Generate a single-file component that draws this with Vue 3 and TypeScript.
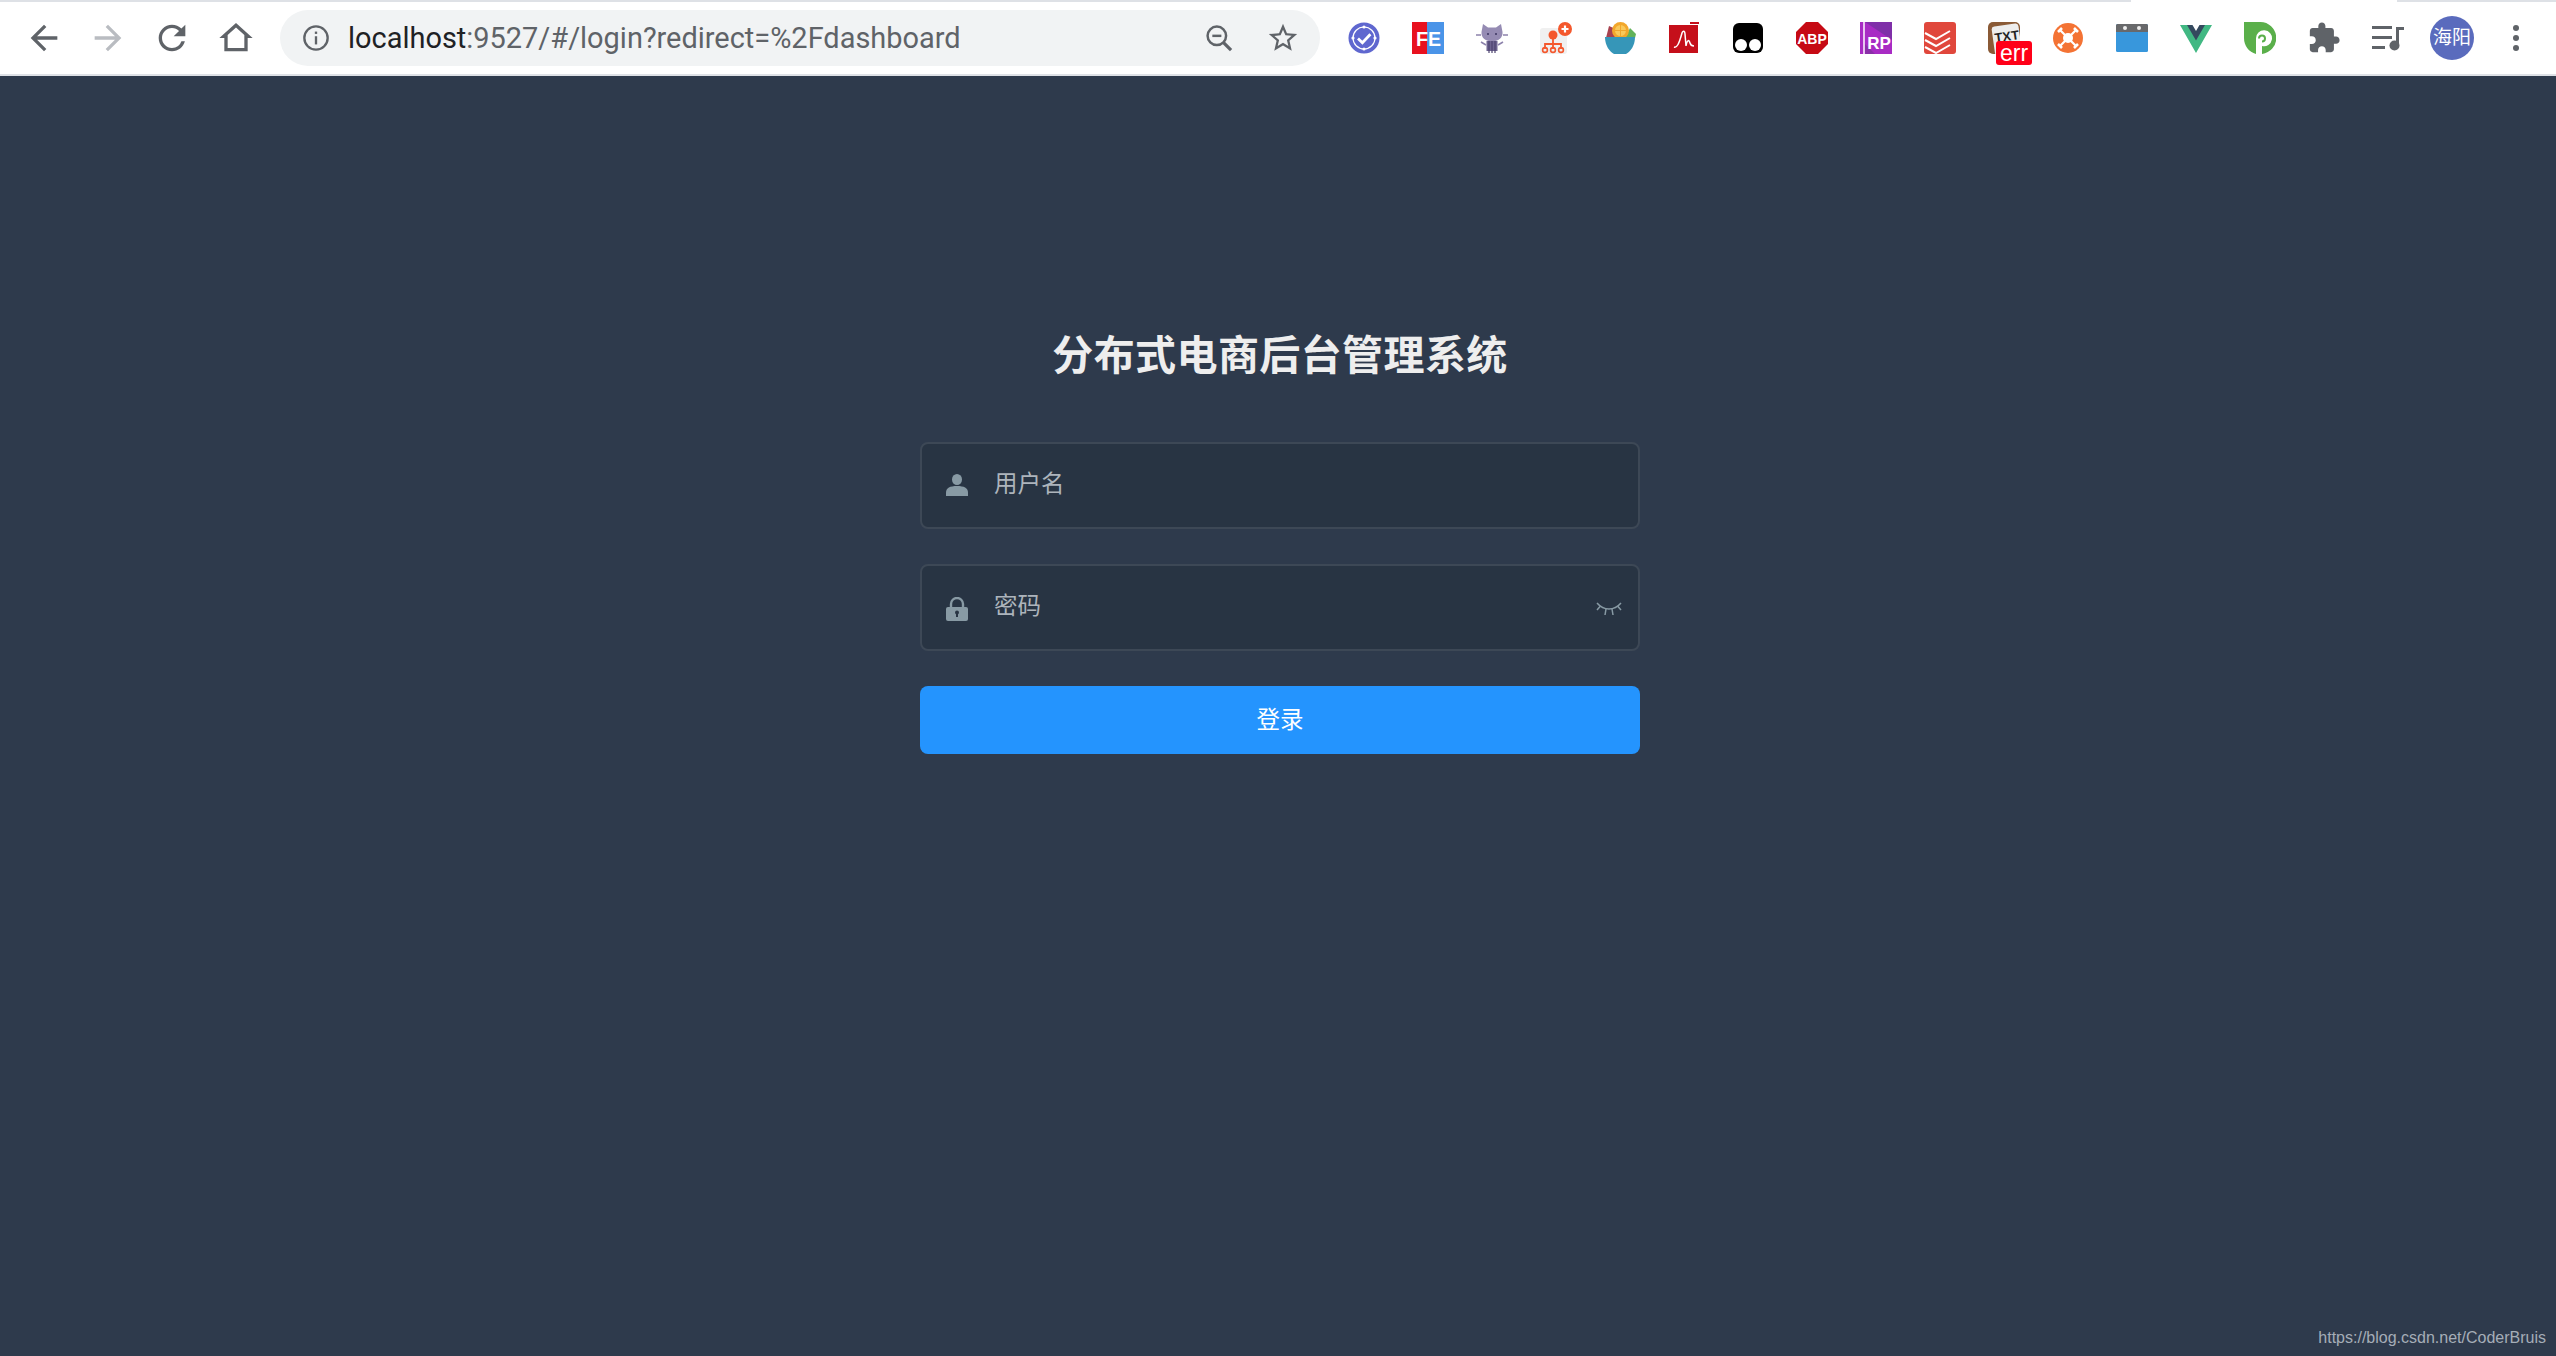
<script setup lang="ts">
const username = ''
const password = ''
</script>

<template>
  <div class="page">
    <header class="toolbar">
      <span class="active-tab"></span>
      <nav class="nav">
        <button class="nav-btn"><svg viewBox="0 0 24 24" width="40" height="40"><path fill="#5f6368" d="M20 11H7.830l5.590-5.590L12 4l-8 8 8 8 1.410-1.410L7.830 13H20v-2z"/></svg></button>
        <button class="nav-btn"><svg viewBox="0 0 24 24" width="40" height="40"><path fill="#b9bcc1" d="M4 11h12.170l-5.590-5.590L12 4l8 8-8 8-1.410-1.410L16.170 13H4v-2z"/></svg></button>
        <button class="nav-btn"><svg viewBox="0 0 24 24" width="40" height="40"><path fill="#5f6368" d="M17.650 6.350A7.958 7.958 0 0 0 12 4c-4.420 0-7.990 3.580-7.990 8s3.570 8 7.990 8c3.730 0 6.840-2.550 7.730-6h-2.080A5.990 5.990 0 0 1 12 18c-3.310 0-6-2.690-6-6s2.690-6 6-6c1.660 0 3.140.69 4.220 1.780L13 11h7V4l-2.350 2.350z"/></svg></button>
        <button class="nav-btn"><svg viewBox="0 0 24 24" width="40" height="40"><path fill="#5f6368" d="M12 5.690l5 4.500V18H7v-7.810l5-4.500M12 3L2 12h3v8h14v-8h3L12 3z"/></svg></button>
      </nav>

      <div class="omnibox">
        <svg class="info" viewBox="0 0 24 24" width="28" height="28"><circle cx="12" cy="12" r="10" fill="none" stroke="#5f6368" stroke-width="2"/><rect x="11" y="10.500" width="2" height="7" fill="#5f6368"/><rect x="11" y="6.500" width="2" height="2" fill="#5f6368"/></svg>
        <span class="url"><span class="host">localhost</span>:9527/#/login?redirect=%2Fdashboard</span>
        <span class="spacer"></span>
        <svg class="omni-zoom" viewBox="0 0 26 26" width="28" height="28"><circle cx="11" cy="11" r="8.600" fill="none" stroke="#5f6368" stroke-width="2.300"/><path d="M6.800 11h8.400" stroke="#5f6368" stroke-width="2.300"/><path d="M17.200 17.200l7 7" stroke="#5f6368" stroke-width="3"/></svg>
        <svg class="omni-star" viewBox="0 0 24 24" width="34" height="34"><path fill="#5f6368" d="M22 9.240l-7.190-.62L12 2 9.190 8.630 2 9.240l5.460 4.730L5.820 21 12 17.270 18.180 21l-1.630-7.030L22 9.240zM12 15.400l-3.760 2.270 1-4.280-3.320-2.880 4.380-.38L12 6.100l1.710 4.010 4.380.38-3.320 2.880 1 4.280L12 15.400z"/></svg>
      </div>

      <div class="extensions">
        <span class="ext">
          <svg viewBox="0 0 32 32" width="32" height="32"><circle cx="16" cy="16" r="15.500" fill="#5f67cf"/><circle cx="16" cy="16" r="11" fill="none" stroke="#fff" stroke-width="1.200"/><path d="M10 16.500l4.400 4.200 8-8.400" fill="none" stroke="#fff" stroke-width="2.800"/><circle cx="16" cy="5" r="1.600" fill="#fff"/><circle cx="16" cy="27" r="1.600" fill="#fff"/><circle cx="5" cy="16" r="1.600" fill="#fff"/><circle cx="27" cy="16" r="1.600" fill="#fff"/></svg>
        </span>
        <span class="ext">
          <svg viewBox="0 0 32 32" width="32" height="32"><rect width="16" height="32" fill="#e8111f"/><rect x="15" width="17" height="32" fill="#4a94e8"/><text x="4" y="24" textLength="25" lengthAdjust="spacingAndGlyphs" class="ext-text fe">FE</text></svg>
        </span>
        <span class="ext">
          <svg viewBox="0 0 32 32" width="32" height="32"><path d="M7 2l5 3.500h8L25 2l1.500 8c.5 6-4.500 9.500-10.500 9.500S5 16 5.500 10z" fill="#958bb3"/><rect x="10.500" y="19" width="11" height="10" fill="#6d6390"/><path d="M13 19v12M16 19v12M19 19v12" stroke="#4c4370" stroke-width="1.200"/><path d="M0 13h5M27 13h5M5 20l5 3M27 20l-5 3" stroke="#8d83ac" stroke-width="1.600"/><circle cx="12" cy="12" r="1" fill="#3d3560"/><circle cx="20" cy="12" r="1" fill="#3d3560"/></svg>
        </span>
        <span class="ext">
          <svg viewBox="0 0 32 32" width="32" height="32"><rect x="0" y="6" width="27" height="26" rx="3" fill="#f0f0f0"/><circle cx="13" cy="13" r="4.500" fill="#f4582d"/><path d="M13 17v5M5 27v-5h16v5M13 22v5" fill="none" stroke="#f4582d" stroke-width="1.800"/><circle cx="5" cy="28" r="2.400" fill="none" stroke="#f4582d" stroke-width="1.600"/><circle cx="13" cy="28" r="2.400" fill="none" stroke="#f4582d" stroke-width="1.600"/><circle cx="21" cy="28" r="2.400" fill="none" stroke="#f4582d" stroke-width="1.600"/><circle cx="25" cy="7" r="7" fill="#f4582d"/><path d="M25 3.500v7M21.500 7h7" stroke="#fff" stroke-width="2.200"/></svg>
        </span>
        <span class="ext">
          <svg viewBox="0 0 32 32" width="32" height="32"><path d="M2 16L5 4l9 4 1 8z" fill="#a8424f"/><path d="M21 16l5-10 6 6-1 4z" fill="#62b25a"/><circle cx="16.500" cy="8.500" r="8.500" fill="#f2a72c"/><circle cx="16.500" cy="8.500" r="5.500" fill="#f9c95a"/><path d="M16.500 3v11M11 8.500h11" stroke="#f2a72c" stroke-width="1"/><path d="M1 15h30c0 9-5 15-9 17H10C6 30 1 24 1 15z" fill="#3696b8"/></svg>
        </span>
        <span class="ext">
          <svg viewBox="0 0 32 32" width="32" height="32"><rect x="1" y="3" width="29" height="28" fill="#c50f1a"/><rect x="22" y="0" width="9" height="2" fill="#c50f1a"/><path d="M6 25c3 1 5-3 8-14 1-3 3-2 3 1l1 12c1-6 3-7 4-3 .5 2 1 3 4 3" fill="none" stroke="#fff" stroke-width="1.500"/></svg>
        </span>
        <span class="ext">
          <svg viewBox="0 0 32 32" width="32" height="32"><rect x="1" y="1" width="30" height="30" rx="6" fill="#000"/><circle cx="9" cy="23" r="6" fill="#fff"/><circle cx="23" cy="23" r="6" fill="#fff"/></svg>
        </span>
        <span class="ext">
          <svg viewBox="0 0 32 32" width="32" height="32"><polygon points="10,0 22,0 32,10 32,22 22,32 10,32 0,22 0,10" fill="#c60a14"/><text x="16" y="21.500" text-anchor="middle" class="ext-text abp">ABP</text></svg>
        </span>
        <span class="ext">
          <svg viewBox="0 0 32 32" width="32" height="32"><rect width="32" height="32" fill="#a82bc4"/><path d="M5 0h27v18z" fill="#7f2fa8"/><path d="M5 32h10L5 22z" fill="#8a2fa8"/><rect x="3" width="2" height="32" fill="#e8c6ef"/><text x="19" y="27" text-anchor="middle" class="ext-text rp">RP</text></svg>
        </span>
        <span class="ext">
          <svg viewBox="0 0 32 32" width="32" height="32"><rect width="32" height="32" rx="3" fill="#e0473c"/><path d="M1 11l11 6 14-8M1 18l11 6 14-8M1 25l11 6 14-8" fill="none" stroke="#fff" stroke-width="2"/></svg>
        </span>
        <span class="ext ext-err">
          <svg viewBox="0 0 32 32" width="32" height="32"><rect width="32" height="32" rx="5" fill="#8a5a36"/><rect x="5" y="3" width="27" height="29" rx="3" fill="#ededed" transform="rotate(-8 18 16)"/><text x="19" y="19" text-anchor="middle" transform="rotate(-8 18 16)" class="ext-text txt">TXT</text></svg>
          <span class="err">err</span>
        </span>
        <span class="ext">
          <svg viewBox="0 0 32 32" width="32" height="32"><circle cx="16" cy="16" r="15" fill="#f47334"/><circle cx="16" cy="16" r="5" fill="#fff"/><path d="M8 8l16 16M24 8L8 24" stroke="#fff" stroke-width="2.200"/><path d="M6 10l4-4M22 6l4 4M6 22l4 4M22 26l4-4" stroke="#fff" stroke-width="2.600"/></svg>
        </span>
        <span class="ext">
          <svg viewBox="0 0 32 32" width="32" height="32"><rect y="2" width="32" height="28" rx="1.500" fill="#3897dc"/><path d="M0 3.500A1.500 1.500 0 0 1 1.500 2h29A1.500 1.500 0 0 1 32 3.500V10H0z" fill="#68696b"/><circle cx="9" cy="6" r="2" fill="#eee"/><circle cx="23" cy="6" r="2" fill="#eee"/></svg>
        </span>
        <span class="ext">
          <svg viewBox="0 0 32 32" width="32" height="32"><polygon points="0,3 8,3 16,17 24,3 32,3 16,31" fill="#41b883"/><polygon points="7,3 12.500,3 16,9 19.500,3 25,3 16,18.500" fill="#34495e"/></svg>
        </span>
        <span class="ext">
          <svg viewBox="0 0 32 32" width="32" height="32"><path d="M0 0h16a16 16 0 0 1 2 31.900V24a8 8 0 1 0-6-7.500V32C5 30 0 24 0 16z" fill="#5aaf4a"/><path d="M15 16.500a3 3 0 1 1 3 3" fill="none" stroke="#5aaf4a" stroke-width="2"/></svg>
        </span>
        <span class="ext">
          <svg viewBox="0 0 24 24" width="34" height="34"><path fill="#5f6368" d="M20.500 11H19V7c0-1.100-.9-2-2-2h-4V3.500C13 2.120 11.880 1 10.500 1S8 2.120 8 3.500V5H4c-1.100 0-1.990.9-1.990 2v3.800H3.500c1.490 0 2.700 1.210 2.700 2.700s-1.210 2.700-2.700 2.700H2V20c0 1.100.9 2 2 2h3.800v-1.500c0-1.490 1.210-2.700 2.700-2.700 1.490 0 2.700 1.210 2.700 2.700V22H17c1.100 0 2-.9 2-2v-4h1.500c1.380 0 2.500-1.120 2.500-2.500S21.880 11 20.500 11z"/></svg>
        </span>
        <span class="ext">
          <svg viewBox="0 0 32 26" width="32" height="26"><path d="M0 1h20v3H0zM0 11h20v3H0zM0 21h13v3H0z" fill="#5f6368"/><path d="M24 2h8v3h-5v16h-3z" fill="#5f6368"/><circle cx="22.500" cy="20.500" r="5" fill="#5f6368"/></svg>
        </span>
        <span class="ext">
          <span class="avatar">海阳</span>
        </span>
        <span class="ext">
          <svg viewBox="0 0 8 28" width="8" height="28"><circle cx="4" cy="4" r="3" fill="#5f6368"/><circle cx="4" cy="14" r="3" fill="#5f6368"/><circle cx="4" cy="24" r="3" fill="#5f6368"/></svg>
        </span>
      </div>
    </header>

    <main class="login">
      <h1 class="title">分布式电商后台管理系统</h1>
      <form class="form" @submit.prevent>
        <label class="field">
          <svg class="field-icon user" viewBox="0 0 22 22" width="22" height="22"><ellipse cx="11" cy="5.500" rx="5" ry="5.500" fill="#889aa4"/><path d="M0 22v-3.500C0 14 4 12 11 12s11 2 11 6.500V22z" fill="#889aa4"/></svg>
          <input class="control" type="text" placeholder="用户名" :value="username" />
        </label>
        <label class="field">
          <svg class="field-icon lock" viewBox="0 0 22 24" width="22" height="24"><path d="M5 11V7a6 6 0 0 1 12 0v4" fill="none" stroke="#889aa4" stroke-width="2.400"/><rect y="10" width="22" height="14" rx="2" fill="#889aa4"/><circle cx="11" cy="15.500" r="2" fill="#283443"/><rect x="10" y="16" width="2" height="4" fill="#283443"/></svg>
          <input class="control" type="password" placeholder="密码" :value="password" />
          <svg class="eye" viewBox="0 0 26 14" width="26" height="14"><path d="M1 1c3 3.500 7 6 12 6s9-2.500 12-6" fill="none" stroke="#889aa4" stroke-width="1.500"/><path d="M1 8l3.500-4M25 8l-3.500-4M9 13l1-6M17 13l-1-6" fill="none" stroke="#889aa4" stroke-width="1.500"/></svg>
        </label>
        <button class="submit" type="submit">登录</button>
      </form>
    </main>

    <footer class="watermark">https://blog.csdn.net/CoderBruis</footer>
  </div>
</template>

<style>
html, body {
  margin: 0;
  background: #2e3a4c;
}
</style>

<style scoped>
.page {
  width: 2556px;
  height: 1356px;
  display: flex;
  flex-direction: column;
  background: #2e3a4c;
  overflow: hidden;
  position: relative;
  font-family: "Liberation Sans", "Noto Sans CJK SC", sans-serif;
}
.toolbar {
  position: relative;
  box-sizing: border-box;
  height: 76px;
  flex: none;
  display: flex;
  align-items: center;
  padding-left: 12px;
  background: #fff;
  border-top: 2px solid #dee1e6;
  border-bottom: 2px solid #dee1e6;
}
.active-tab {
  position: absolute;
  left: 2131px;
  top: -2px;
  width: 266px;
  height: 2px;
  background: #fff;
}
.nav {
  display: flex;
  width: 256px;
  flex: none;
}
.nav-btn {
  width: 64px;
  height: 56px;
  padding: 0;
  border: 0;
  background: none;
  display: flex;
  align-items: center;
  justify-content: center;
}
.omnibox {
  width: 1040px;
  height: 56px;
  margin-left: 12px;
  box-sizing: border-box;
  flex: none;
  display: flex;
  align-items: center;
  padding: 0 20px 0 22px;
  background: #f1f3f4;
  border-radius: 28px;
}
.url {
  margin-left: 18px;
  font-family: Roboto, "Liberation Sans", sans-serif;
  font-size: 28.950px;
  color: #5f6368;
  white-space: nowrap;
}
.host {
  color: #202124;
}
.spacer {
  flex: 1;
}
.omni-star {
  margin-left: 33px;
}
.extensions {
  margin-left: 12px;
  display: flex;
}
.ext {
  position: relative;
  width: 64px;
  height: 44px;
  display: flex;
  align-items: center;
  justify-content: center;
}
.ext-text {
  font-family: "Liberation Sans", sans-serif;
  font-weight: 700;
  fill: #fff;
}
.fe { font-size: 20px; }
.abp { font-size: 14px; }
.rp { font-size: 17px; }
.txt { font-size: 13px; fill: #222; }
.err {
  position: absolute;
  left: 24px;
  top: 25px;
  width: 36px;
  height: 24px;
  border-radius: 3px;
  background: #ff0018;
  color: #fff;
  font-family: "Liberation Sans", sans-serif;
  font-size: 23px;
  line-height: 25px;
  text-align: center;
}
.avatar {
  width: 44px;
  height: 44px;
  border-radius: 50%;
  background: #5a6bbd;
  color: #fff;
  font-size: 19px;
  line-height: 44px;
  text-align: center;
  white-space: nowrap;
}
.login {
  width: 720px;
  margin-left: 920px;
  padding-top: 255px;
}
.title {
  margin: 0 0 61px;
  height: 50px;
  font-size: 41px;
  line-height: 50px;
  font-weight: 700;
  color: #eee;
  text-align: center;
  letter-spacing: 0.400px;
}
.form {
  display: flex;
  flex-direction: column;
  gap: 35px;
}
.field {
  box-sizing: border-box;
  height: 87px;
  display: flex;
  align-items: center;
  padding: 0 16px 0 24px;
  background: #283443;
  border: 2px solid #3d4856;
  border-radius: 8px;
}
.field-icon {
  flex: none;
}
.user {
  margin-top: -1px;
}
.lock {
  margin-top: 2px;
}
.control {
  flex: 1;
  min-width: 0;
  height: 60px;
  margin: -3px 0 0 26px;
  padding: 0;
  border: 0;
  outline: 0;
  background: transparent;
  color: #fff;
  font-family: "Liberation Sans", "Noto Sans CJK SC", sans-serif;
  font-size: 23.500px;
}
.control::placeholder {
  color: #adb4bc;
  opacity: 1;
}
.eye {
  flex: none;
  margin-top: 2px;
}
.submit {
  height: 68px;
  padding: 0 0 5px;
  border: 0;
  border-radius: 8px;
  background: #2494fe;
  color: #fff;
  font-family: "Liberation Sans", "Noto Sans CJK SC", sans-serif;
  font-size: 23.500px;
}
.watermark {
  position: absolute;
  right: 10px;
  bottom: 9px;
  color: #a5adb7;
  font-size: 16px;
}
</style>
